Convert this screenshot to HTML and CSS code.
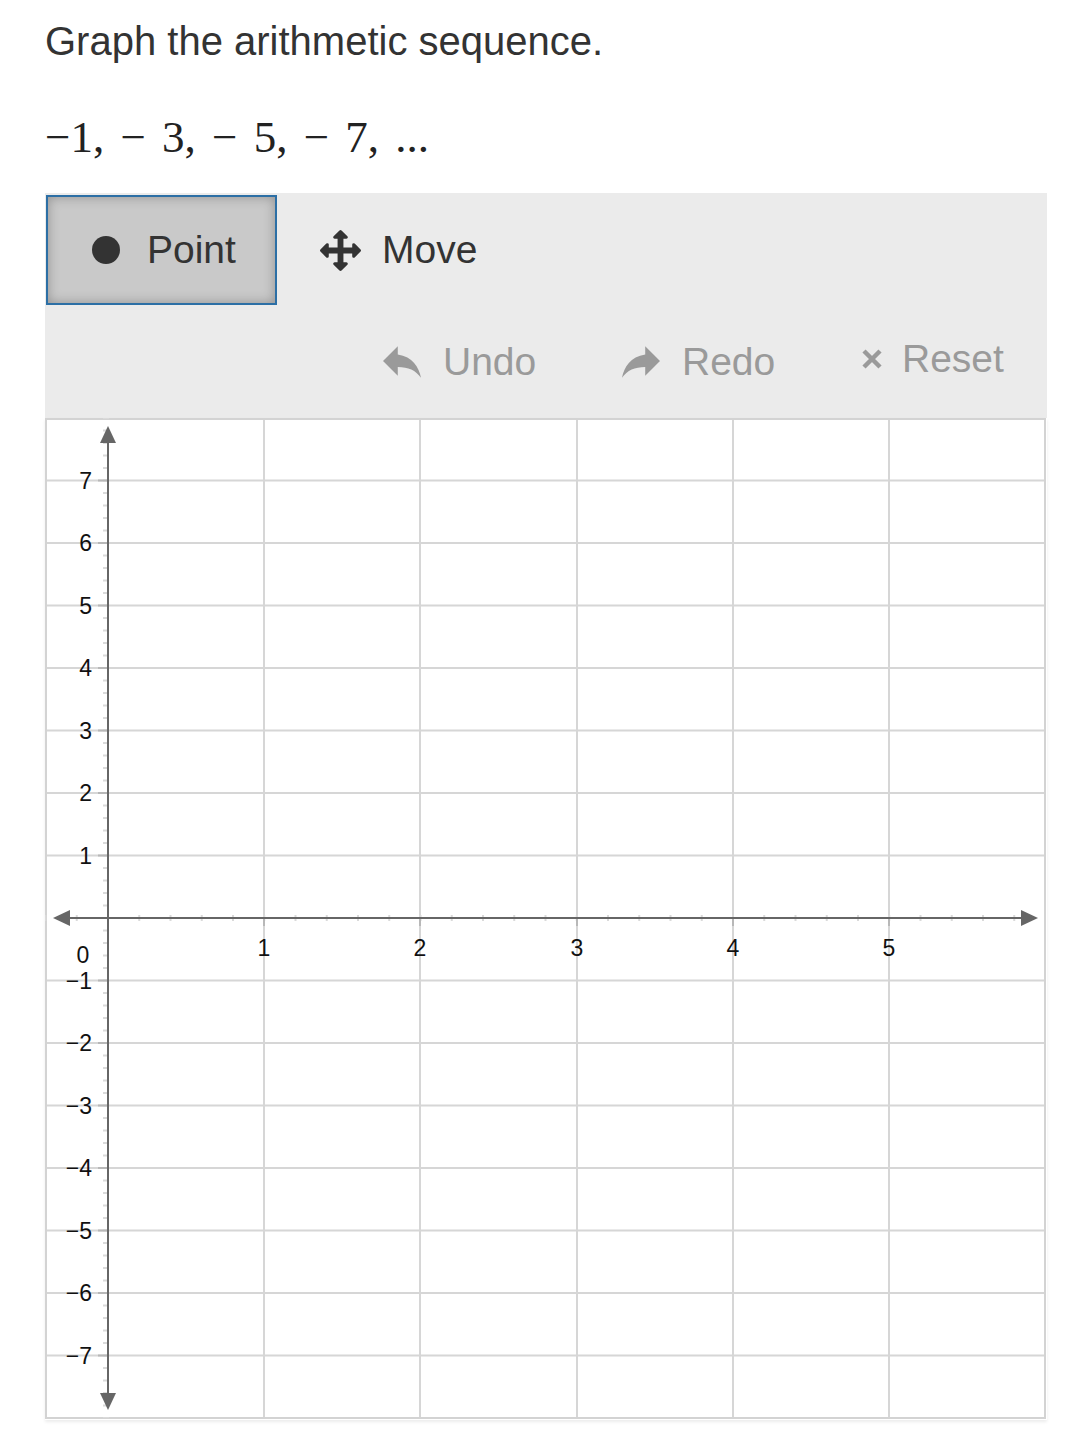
FILE: index.html
```html
<!DOCTYPE html>
<html lang="en">
<head>
<meta charset="utf-8">
<title>Graph the arithmetic sequence</title>
<link rel="stylesheet" href="styles.css">
</head>
<body>
<main class="page">
  <p class="prompt">Graph the arithmetic sequence.</p>
  <p class="math">−1, − 3, − 5, − 7, ...</p>

  <div class="toolbar">
    <div class="tools">
      <button class="tool tool-active" type="button"><span class="dot"></span><span class="tool-label">Point</span></button>
      <button class="tool tool-move" type="button">
        <svg class="move-icon" viewBox="0 0 1792 1792" aria-hidden="true"><path d="M1792 896q0 26-19 45l-256 256q-19 19-45 19t-45-19-19-45v-128h-384v384h128q26 0 45 19t19 45-19 45l-256 256q-19 19-45 19t-45-19l-256-256q-19-19-19-45t19-45 45-19h128v-384h-384v128q0 26-19 45t-45 19-45-19l-256-256q-19-19-19-45t19-45l256-256q19-19 45-19t45 19 19 45v128h384v-384h-128q-26 0-45-19t-19-45 19-45l256-256q19-19 45-19t45 19l256 256q19 19 19 45t-19 45-45 19h-128v384h384v-128q0-26 19-45t45-19 45 19l256 256q19 19 19 45z"/></svg>
        <span class="tool-label">Move</span>
      </button>
    </div>
    <div class="actions">
      <button class="action action-undo" type="button">
        <svg class="action-icon" viewBox="3 5 18 15" aria-hidden="true"><path d="M10 9V5l-7 7 7 7v-4.1c5 0 8.5 1.6 11 5.1-1-5-4-10-11-11z"/></svg>
        <span class="action-label">Undo</span>
      </button>
      <button class="action action-redo" type="button">
        <svg class="action-icon" viewBox="3 5 18 15" aria-hidden="true"><path d="M14 9V5l7 7-7 7v-4.1c-5 0-8.5 1.6-11 5.1 1-5 4-10 11-11z"/></svg>
        <span class="action-label">Redo</span>
      </button>
      <button class="action action-reset" type="button">
        <svg class="reset-icon" viewBox="0 0 24 24" aria-hidden="true"><path d="M4 4 L20 20 M20 4 L4 20"/></svg>
        <span class="action-label">Reset</span>
      </button>
    </div>
  </div>

  <div class="graph">
    <svg class="plane" width="1002" height="1002" viewBox="0 0 1002 1002">
      <g class="grid">
        <line x1="219" y1="0" x2="219" y2="1001"/>
        <line x1="375" y1="0" x2="375" y2="1001"/>
        <line x1="532" y1="0" x2="532" y2="1001"/>
        <line x1="688" y1="0" x2="688" y2="1001"/>
        <line x1="844" y1="0" x2="844" y2="1001"/>
        <line x1="0" y1="62.5" x2="1001" y2="62.5"/>
        <line x1="0" y1="125" x2="1001" y2="125"/>
        <line x1="0" y1="187.5" x2="1001" y2="187.5"/>
        <line x1="0" y1="250" x2="1001" y2="250"/>
        <line x1="0" y1="312.5" x2="1001" y2="312.5"/>
        <line x1="0" y1="375" x2="1001" y2="375"/>
        <line x1="0" y1="437.5" x2="1001" y2="437.5"/>
        <line x1="0" y1="562.5" x2="1001" y2="562.5"/>
        <line x1="0" y1="625" x2="1001" y2="625"/>
        <line x1="0" y1="687.5" x2="1001" y2="687.5"/>
        <line x1="0" y1="750" x2="1001" y2="750"/>
        <line x1="0" y1="812.5" x2="1001" y2="812.5"/>
        <line x1="0" y1="875" x2="1001" y2="875"/>
        <line x1="0" y1="937.5" x2="1001" y2="937.5"/>
      </g>
      <g class="frame">
        <line x1="1" y1="0" x2="1" y2="1001"/>
        <line x1="1000" y1="0" x2="1000" y2="1001"/>
        <line x1="0" y1="1" x2="1001" y2="1"/>
        <line x1="0" y1="1000" x2="1001" y2="1000"/>
      </g>
      <g class="minor">
        <line x1="-0.5" y1="500" x2="980" y2="500" stroke-dasharray="2 29.25" stroke-width="6"/>
        <line x1="61" y1="-1" x2="61" y2="1000" stroke-dasharray="2 10.5" stroke-width="6"/>
      </g>
      <g class="major">
        <line x1="53" y1="62.5" x2="63" y2="62.5"/>
        <line x1="53" y1="125" x2="63" y2="125"/>
        <line x1="53" y1="187.5" x2="63" y2="187.5"/>
        <line x1="53" y1="250" x2="63" y2="250"/>
        <line x1="53" y1="312.5" x2="63" y2="312.5"/>
        <line x1="53" y1="375" x2="63" y2="375"/>
        <line x1="53" y1="437.5" x2="63" y2="437.5"/>
        <line x1="53" y1="562.5" x2="63" y2="562.5"/>
        <line x1="53" y1="625" x2="63" y2="625"/>
        <line x1="53" y1="687.5" x2="63" y2="687.5"/>
        <line x1="53" y1="750" x2="63" y2="750"/>
        <line x1="53" y1="812.5" x2="63" y2="812.5"/>
        <line x1="53" y1="875" x2="63" y2="875"/>
        <line x1="53" y1="937.5" x2="63" y2="937.5"/>
        <line x1="219" y1="500" x2="219" y2="508"/>
        <line x1="375" y1="500" x2="375" y2="508"/>
        <line x1="532" y1="500" x2="532" y2="508"/>
        <line x1="688" y1="500" x2="688" y2="508"/>
        <line x1="844" y1="500" x2="844" y2="508"/>
      </g>
      <g class="axes">
        <line x1="63" y1="20" x2="63" y2="980"/>
        <line x1="20" y1="500" x2="980" y2="500"/>
      </g>
      <g class="arrows">
        <polygon points="63,8 55,25 71,25"/>
        <polygon points="63,992 55,975 71,975"/>
        <polygon points="8,500 25,492 25,508"/>
        <polygon points="993,500 976,492 976,508"/>
      </g>
      <g class="ylabels">
        <text x="47" y="70.5">7</text>
        <text x="47" y="133">6</text>
        <text x="47" y="195.5">5</text>
        <text x="47" y="258">4</text>
        <text x="47" y="320.5">3</text>
        <text x="47" y="383">2</text>
        <text x="47" y="445.5">1</text>
        <text x="47" y="570.5">−1</text>
        <text x="47" y="633">−2</text>
        <text x="47" y="695.5">−3</text>
        <text x="47" y="758">−4</text>
        <text x="47" y="820.5">−5</text>
        <text x="47" y="883">−6</text>
        <text x="47" y="945.5">−7</text>
      </g>
      <g class="xlabels">
        <text x="38" y="545">0</text>
        <text x="219" y="538">1</text>
        <text x="375" y="538">2</text>
        <text x="532" y="538">3</text>
        <text x="688" y="538">4</text>
        <text x="844" y="538">5</text>
      </g>
    </svg>
  </div>
</main>
</body>
</html>
```

FILE: styles.css
```css
* { box-sizing: border-box; }

html, body {
  margin: 0;
  padding: 0;
  background: #ffffff;
}

.page {
  padding: 18px 25px 30px 45px;
  font-family: "Liberation Sans", Arial, Helvetica, sans-serif;
  color: #333333;
}

.prompt {
  margin: 0;
  font-size: 40px;
  line-height: 46px;
  color: #333333;
}

.math {
  margin: 48px 0 0 0;
  font-family: "Liberation Serif", "Times New Roman", serif;
  font-size: 45px;
  line-height: 50px;
  word-spacing: 5px;
  color: #222222;
}

.toolbar {
  margin-top: 31px;
  width: 1002px;
  background: #ebebeb;
}

.tools {
  display: flex;
  align-items: center;
  padding: 2px 0 0 1px;
  height: 112px;
}

.tool {
  display: flex;
  align-items: center;
  height: 110px;
  border: 0;
  background: transparent;
  padding: 0;
  font-family: "Liberation Sans", Arial, Helvetica, sans-serif;
  font-size: 39px;
  color: #333333;
}

.tool-active {
  width: 231px;
  padding-left: 44px;
  border: 2px solid #2c6fa5;
  background: #c9c9c9;
  box-shadow: inset 0 0 12px rgba(0, 0, 0, 0.28);
}

.dot {
  width: 28px;
  height: 28px;
  border-radius: 50%;
  background: #333333;
  margin-right: 27px;
}

.tool-move {
  margin-left: 43px;
}

.move-icon {
  width: 41px;
  height: 41px;
  fill: #333333;
  margin-right: 21px;
}

.actions {
  display: flex;
  align-items: center;
  height: 113px;
  padding-left: 338px;
}

.action {
  display: flex;
  align-items: center;
  border: 0;
  background: transparent;
  padding: 0;
  font-family: "Liberation Sans", Arial, Helvetica, sans-serif;
  font-size: 39px;
  color: #9a9a9a;
}

.action-undo { width: 239px; }
.action-redo { width: 238px; }

.action-icon {
  width: 38px;
  height: 32px;
  fill: #9a9a9a;
  margin-right: 22px;
}

.action-reset { margin-top: -6px; }

.reset-icon {
  width: 24px;
  height: 24px;
  fill: none;
  stroke: #9a9a9a;
  stroke-width: 4.5;
  margin-right: 18px;
}

.graph {
  width: 1002px;
  height: 1002px;
  box-shadow: 0 2px 3px rgba(0, 0, 0, 0.08);
}

.plane {
  display: block;
}

.grid line {
  stroke: #d6d6d6;
  stroke-width: 2;
}

.frame line {
  stroke: #d3d3d3;
  stroke-width: 2;
}

.minor line {
  stroke: #dadada;
}

.major line {
  stroke: #b8b8b8;
  stroke-width: 2;
}

.axes line {
  stroke: #666666;
  stroke-width: 2;
}

.arrows polygon {
  fill: #666666;
}

.ylabels text,
.xlabels text {
  font-family: "Liberation Sans", Arial, Helvetica, sans-serif;
  font-size: 23px;
  fill: #111111;
}

.ylabels text { text-anchor: end; }
.xlabels text { text-anchor: middle; }
```
